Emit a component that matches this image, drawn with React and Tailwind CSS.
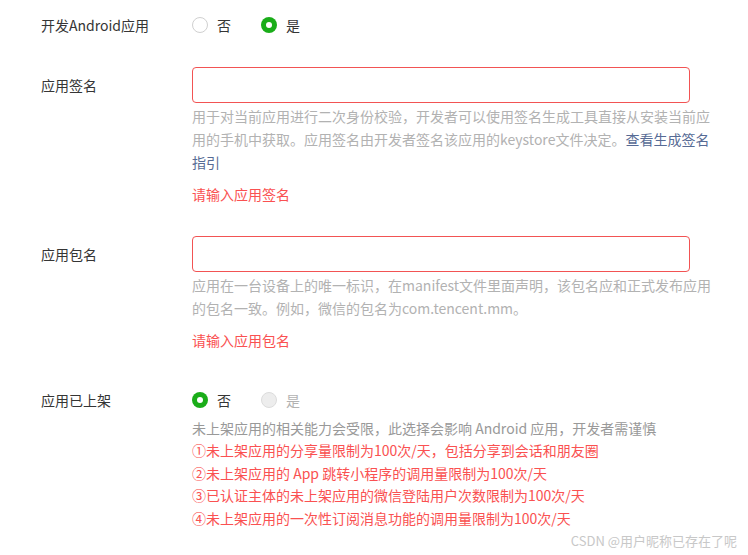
import React, { useState } from "react";

const font = { fontFamily: '"Noto Sans CJK SC", "Noto Sans", sans-serif' };

function Radio({ checked, disabled, label, onClick }) {
  return (
    <label onClick={onClick} className="flex items-center cursor-pointer">
      {checked ? (
        <span className="w-4 h-4 rounded-full bg-[#1aad19] flex items-center justify-center">
          <span className="w-[6px] h-[6px] rounded-full bg-white" />
        </span>
      ) : disabled ? (
        <span className="w-4 h-4 rounded-full bg-[#ededed] border border-[#dcdcdc]" />
      ) : (
        <span className="w-4 h-4 rounded-full bg-white border border-[#d0d0d0]" />
      )}
      <span className={`ml-[9px] text-[14px] ${disabled ? "text-[#b2b2b2]" : "text-[#353535]"}`}>{label}</span>
    </label>
  );
}

export default function App() {
  const [android, setAndroid] = useState(true);
  const [sign, setSign] = useState("");
  const [pkg, setPkg] = useState("");

  return (
    <div style={font} className="relative w-[748px] h-[555px] bg-white overflow-hidden pl-[41px] pt-[14px] text-[14px] text-[#353535]">
      {/* 开发Android应用 */}
      <div className="flex items-center h-[22px]">
        <div className="w-[151px] leading-[22px]">开发Android应用</div>
        <div className="flex items-center gap-[30px]">
          <Radio checked={!android} label="否" onClick={() => setAndroid(false)} />
          <Radio checked={android} label="是" onClick={() => setAndroid(true)} />
        </div>
      </div>

      {/* 应用签名 */}
      <div className="flex mt-[31px]">
        <div className="w-[151px] leading-[36px]">应用签名</div>
        <div className="w-[520px]">
          <input
            value={sign}
            onChange={(e) => setSign(e.target.value)}
            className="block w-[498px] h-[36px] border border-[#f25353] rounded-[4px] outline-none px-3"
          />
          <p className="mt-[2px] leading-[23px] text-[#b2b2b2]">
            用于对当前应用进行二次身份校验，开发者可以使用签名生成工具直接从安装当前应用的手机中获取。应用签名由开发者签名该应用的keystore文件决定。<span className="text-[#576b95]">查看生成签名指引</span>
          </p>
          <p className="mt-[9px] leading-[23px] text-[#fa5151]">请输入应用签名</p>
        </div>
      </div>

      {/* 应用包名 */}
      <div className="flex mt-[30px]">
        <div className="w-[151px] leading-[36px]">应用包名</div>
        <div className="w-[520px]">
          <input
            value={pkg}
            onChange={(e) => setPkg(e.target.value)}
            className="block w-[498px] h-[36px] border border-[#f25353] rounded-[4px] outline-none px-3"
          />
          <p className="mt-[2px] leading-[23px] text-[#b2b2b2]">
            应用在一台设备上的唯一标识，在manifest文件里面声明，该包名应和正式发布应用的包名一致。例如，微信的包名为com.tencent.mm。
          </p>
          <p className="mt-[9px] leading-[23px] text-[#fa5151]">请输入应用包名</p>
        </div>
      </div>

      {/* 应用已上架 */}
      <div className="flex mt-[37px]">
        <div className="w-[151px] leading-[22px]">应用已上架</div>
        <div>
          <div className="flex items-center h-[22px] gap-[30px]">
            <Radio checked label="否" />
            <Radio disabled label="是" />
          </div>
          <div className="mt-[6px] leading-[22.4px]">
            <p className="text-[#999]">未上架应用的相关能力会受限，此选择会影响 Android 应用，开发者需谨慎</p>
            <p className="text-[#fa5151]">①未上架应用的分享量限制为100次/天，包括分享到会话和朋友圈</p>
            <p className="text-[#fa5151]">②未上架应用的 App 跳转小程序的调用量限制为100次/天</p>
            <p className="text-[#fa5151]">③已认证主体的未上架应用的微信登陆用户次数限制为100次/天</p>
            <p className="text-[#fa5151]">④未上架应用的一次性订阅消息功能的调用量限制为100次/天</p>
          </div>
        </div>
      </div>

      {/* watermark */}
      <div className="absolute right-[11px] bottom-[5px] text-[13px] text-[#c8c8c8]">CSDN @用户昵称已存在了呢</div>
    </div>
  );
}
